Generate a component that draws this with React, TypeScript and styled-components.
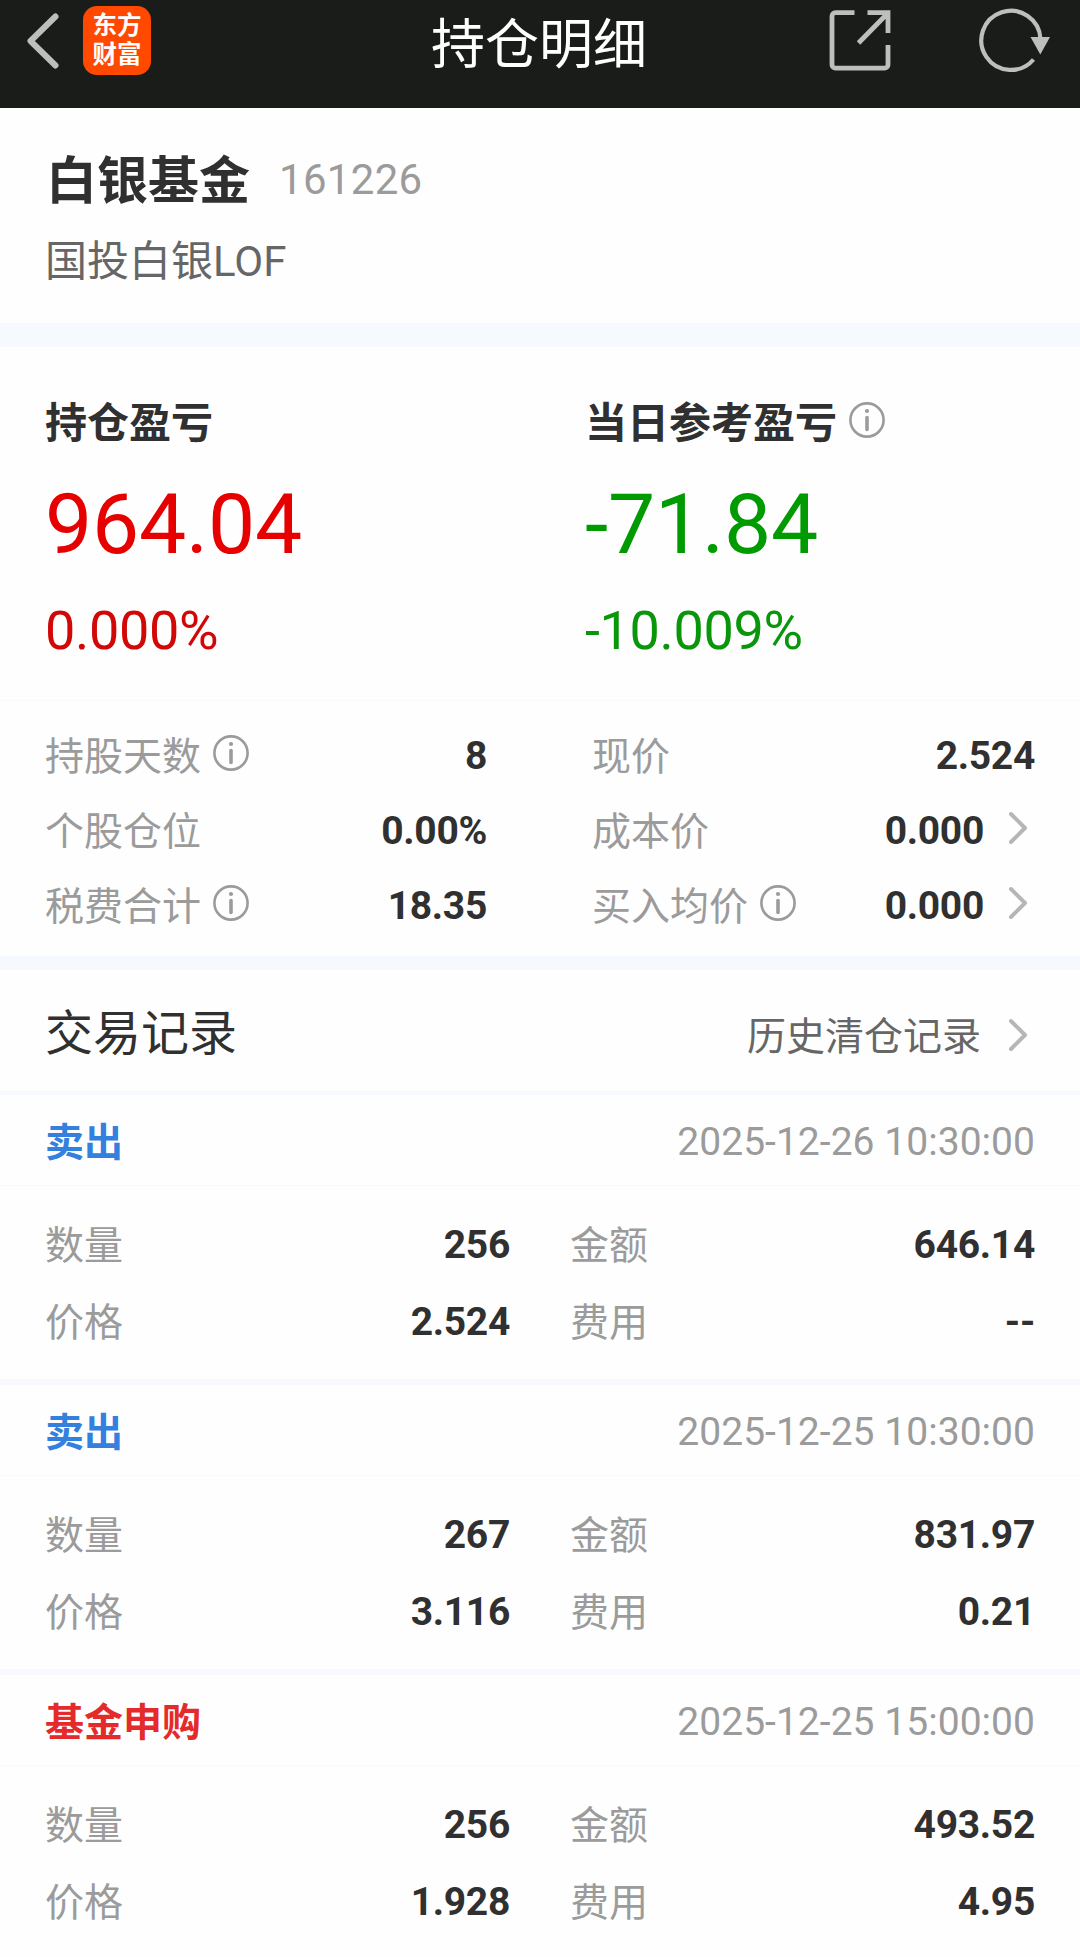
import React from 'react';
import styled, { createGlobalStyle } from 'styled-components';

const GlobalStyle = createGlobalStyle`
  *, *::before, *::after { box-sizing: border-box; }
  body {
    margin: 0;
    background: #fefefe;
    font-family: Roboto, "Noto Sans CJK SC", sans-serif;
    color: #303030;
  }
`;

const Page = styled.main`
  width: 1080px;
  height: 1957px;
  overflow: hidden;
  background: #fefefe;
`;

const NavBar = styled.header`
  display: grid;
  grid-template-columns: 1fr auto 1fr;
  height: 108px;
  padding: 0 28px 16px 26px;
  background: #191c19;
`;

const NavGroup = styled.div<{ $end?: boolean }>`
  display: flex;
  justify-content: ${(p) => (p.$end ? 'flex-end' : 'flex-start')};
  gap: ${(p) => (p.$end ? '87px' : '22px')};
  padding: 6px ${(p) => (p.$end ? '1px' : '0')} 0 0;
`;

const NavTitle = styled.h1`
  margin: 0;
  color: #fff;
  font-size: 54px;
  font-weight: 400;
  line-height: 92px;
`;

const Icon = styled.svg`
  display: block;
  flex: none;
`;

const Logo = styled.div`
  width: 68px;
  height: 69px;
  padding-top: 5px;
  border-radius: 14px;
  background: #ff4800;
  color: #fff;
  font-size: 24.5px;
  font-weight: 700;
  line-height: 29px;
  text-align: center;
`;

const FundHeader = styled.section`
  height: 215px;
  padding: 44px 46px 0 45px;
`;

const FundLine = styled.div`
  display: flex;
  align-items: center;
  gap: 29px;
  height: 60px;
`;

const FundName = styled.h2`
  margin: 0;
  padding-left: 1px;
  font-size: 51px;
  font-weight: 700;
  line-height: 60px;
`;

const FundCode = styled.span`
  padding-bottom: 4px;
  color: #9b9b9b;
  font-size: 42px;
  line-height: 56px;
  letter-spacing: 0.3px;
`;

const FundFullName = styled.div`
  margin-top: 25px;
  color: #666;
  font-size: 42px;
  line-height: 50px;
`;

const Band = styled.div<{ $size: number }>`
  height: ${(p) => p.$size}px;
  background: #f6faff;
`;

const Summary = styled.section`
  display: grid;
  grid-template-columns: 1fr 1fr;
  height: 354px;
  padding-top: 47px;
  border-bottom: 1px solid #fafafa;
`;

const SummaryCell = styled.div`
  padding-left: 45px;
`;

const SummaryTitle = styled.div`
  display: flex;
  align-items: center;
  gap: 12px;
  font-size: 42px;
  font-weight: 700;
  line-height: 60px;
`;

const Raised = styled.span<{ $by?: number }>`
  display: flex;
  padding-bottom: ${(p) => p.$by ?? 7}px;
`;

const Amount = styled.div<{ $up?: boolean }>`
  margin-top: 21px;
  color: ${(p) => (p.$up ? '#e60000' : '#009b00')};
  font-size: 84px;
  line-height: 100px;
  letter-spacing: -0.2px;
`;

const Percent = styled.div<{ $up?: boolean }>`
  margin-top: 26px;
  color: ${(p) => (p.$up ? '#d20808' : '#0a960a')};
  font-size: 54px;
  line-height: 60px;
  letter-spacing: -0.35px;
`;

const Stats = styled.section`
  display: grid;
  grid-template-columns: 442px 443px;
  grid-auto-rows: 75px;
  column-gap: 105px;
  height: 255px;
  padding: 17px 45px 0;
`;

const Field = styled.div`
  display: flex;
  align-items: center;
  justify-content: space-between;
  font-size: 39px;
  line-height: 46px;
`;

const Label = styled.span`
  display: flex;
  align-items: center;
  gap: 12px;
  padding-top: 2px;
  color: #9b9b9b;
`;

const Value = styled.span`
  display: flex;
  align-items: center;
  gap: 24px;
  font-weight: 700;
  letter-spacing: -0.3px;
`;

const ArrowSlot = styled.span`
  display: flex;
  padding: 0 7px 5px 0;
`;

const RecordsHeader = styled.section`
  display: flex;
  align-items: center;
  justify-content: space-between;
  height: 125px;
  padding: 6px 45px 0;
  border-bottom: 4px solid #f6faff;
`;

const RecordsTitle = styled.h3`
  margin: 0;
  font-size: 48px;
  font-weight: 400;
  line-height: 56px;
`;

const HistoryLink = styled.a`
  display: flex;
  align-items: center;
  gap: 27px;
  padding-top: 7px;
  color: #666;
  font-size: 39px;
  line-height: 46px;
`;

const Record = styled.article`
  height: 290px;
  border-bottom: 6px solid #f7f9ff;
`;

const RecordHead = styled.div`
  display: flex;
  align-items: center;
  justify-content: space-between;
  height: 91px;
  padding: 4px 45px 0;
  border-bottom: 1px solid #fafafa;
  font-size: 39px;
  line-height: 46px;
`;

const Side = styled.span<{ $buy?: boolean }>`
  padding-top: 1px;
  color: ${(p) => (p.$buy ? '#e42a2a' : '#3380de')};
  font-weight: 700;
`;

const Time = styled.time`
  color: #9b9b9b;
  letter-spacing: 0.04px;
`;

const RecordBody = styled.div`
  display: grid;
  grid-template-columns: 465px 465px;
  grid-auto-rows: 77px;
  column-gap: 60px;
  padding: 20px 45px 0;
`;

const InfoIcon = () => (
  <Icon width="36" height="36" viewBox="0 0 36 36" fill="none" stroke="#9b9b9b">
    <circle cx="18" cy="18" r="16.6" strokeWidth="2.6" />
    <circle cx="18" cy="9" r="2.1" fill="#9b9b9b" stroke="none" />
    <path d="M18 15.5v12" strokeWidth="3.6" strokeLinecap="round" />
  </Icon>
);

const Chevron = () => (
  <Icon width="20" height="34" viewBox="0 0 20 34" fill="none" stroke="#b6b6b8">
    <path d="M3 3l14 14L3 31" strokeWidth="4" strokeLinecap="round" strokeLinejoin="round" />
  </Icon>
);

type FieldData = { label: string; value: string; info?: boolean; link?: boolean };

const stats: FieldData[] = [
  { label: '持股天数', value: '8', info: true },
  { label: '现价', value: '2.524' },
  { label: '个股仓位', value: '0.00%' },
  { label: '成本价', value: '0.000', link: true },
  { label: '税费合计', value: '18.35', info: true },
  { label: '买入均价', value: '0.000', info: true, link: true },
];

const records = [
  { side: '卖出', buy: false, time: '2025-12-26 10:30:00', qty: '256', amount: '646.14', price: '2.524', fee: '--' },
  { side: '卖出', buy: false, time: '2025-12-25 10:30:00', qty: '267', amount: '831.97', price: '3.116', fee: '0.21' },
  { side: '基金申购', buy: true, time: '2025-12-25 15:00:00', qty: '256', amount: '493.52', price: '1.928', fee: '4.95' },
];

const FieldRow = ({ label, value, info, link }: FieldData) => (
  <Field>
    <Label>
      {label}
      {info && <Raised><InfoIcon /></Raised>}
    </Label>
    <Value>
      {value}
      {link && <ArrowSlot><Chevron /></ArrowSlot>}
    </Value>
  </Field>
);

export default function App() {
  return (
    <Page>
      <GlobalStyle />
      <NavBar>
        <NavGroup>
          <Icon width="35" height="69" viewBox="0 0 35 69" fill="none" stroke="#bebebe">
            <path d="M29.5 10.5L4.5 35l25 24.5" strokeWidth="6" strokeLinecap="round" strokeLinejoin="round" />
          </Icon>
          <Logo>东方<br />财富</Logo>
        </NavGroup>
        <NavTitle>持仓明细</NavTitle>
        <NavGroup $end>
          <Icon width="62" height="69" viewBox="0 0 62 69" fill="none" stroke="#bebebe" strokeWidth="4.8">
            <path d="M25.5 6.7H6.5a3.5 3.5 0 0 0-3.5 3.5v48.5a3.5 3.5 0 0 0 3.5 3.5h49a3.5 3.5 0 0 0 3.5-3.5V39" />
            <path d="M38.5 6.7H59V27M58 8L29.5 37" />
          </Icon>
          <Icon width="73" height="69" viewBox="0 0 73 69" fill="none" stroke="#bebebe" strokeWidth="4.2">
            <path d="M62.5 33a29.6 29.6 0 1 0-7 20.5" />
            <path d="M52.5 31h19.5l-9.7 17.5z" fill="#bebebe" stroke="none" />
          </Icon>
        </NavGroup>
      </NavBar>

      <FundHeader>
        <FundLine>
          <FundName>白银基金</FundName>
          <FundCode>161226</FundCode>
        </FundLine>
        <FundFullName>国投白银LOF</FundFullName>
      </FundHeader>
      <Band $size={24} />

      <Summary>
        <SummaryCell>
          <SummaryTitle>持仓盈亏</SummaryTitle>
          <Amount $up>964.04</Amount>
          <Percent $up>0.000%</Percent>
        </SummaryCell>
        <SummaryCell>
          <SummaryTitle>当日参考盈亏<Raised $by={9}><InfoIcon /></Raised></SummaryTitle>
          <Amount>-71.84</Amount>
          <Percent>-10.009%</Percent>
        </SummaryCell>
      </Summary>

      <Stats>
        {stats.map((s) => <FieldRow key={s.label} {...s} />)}
      </Stats>
      <Band $size={14} />

      <RecordsHeader>
        <RecordsTitle>交易记录</RecordsTitle>
        <HistoryLink>历史清仓记录<ArrowSlot><Chevron /></ArrowSlot></HistoryLink>
      </RecordsHeader>

      {records.map((r) => (
        <Record key={r.time}>
          <RecordHead>
            <Side $buy={r.buy}>{r.side}</Side>
            <Time>{r.time}</Time>
          </RecordHead>
          <RecordBody>
            <FieldRow label="数量" value={r.qty} />
            <FieldRow label="金额" value={r.amount} />
            <FieldRow label="价格" value={r.price} />
            <FieldRow label="费用" value={r.fee} />
          </RecordBody>
        </Record>
      ))}
    </Page>
  );
}
